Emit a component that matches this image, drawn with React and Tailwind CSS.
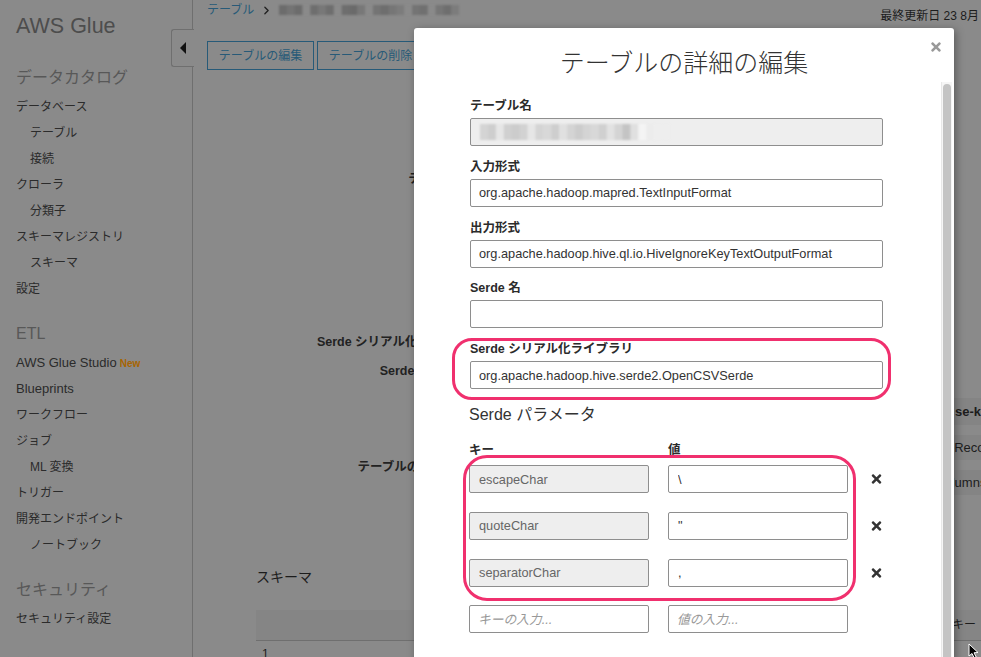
import { FaTimes } from "react-icons/fa";
import { ChevronRight } from "lucide-react";

const catalogItems = [
  { label: "データベース" },
  { label: "テーブル", sub: true },
  { label: "接続", sub: true },
  { label: "クローラ" },
  { label: "分類子", sub: true },
  { label: "スキーマレジストリ" },
  { label: "スキーマ", sub: true },
  { label: "設定" },
];

const etlItems = [
  { label: "AWS Glue Studio", isNew: true, latin: true },
  { label: "Blueprints", latin: true },
  { label: "ワークフロー" },
  { label: "ジョブ" },
  { label: "ML 変換", sub: true },
  { label: "トリガー" },
  { label: "開発エンドポイント" },
  { label: "ノートブック", sub: true },
];

const serdeParams = [
  { key: "escapeChar", value: "\\" },
  { key: "quoteChar", value: '"' },
  { key: "separatorChar", value: "," },
];

const NavGroup = ({ title, items }) => (
  <div className="mt-5">
    <h3 className="h-6 mb-1 text-base leading-6 text-[#585858]">{title}</h3>
    {items.map((item) => (
      <div
        key={item.label}
        className={`h-[26px] leading-[26px] text-[#2b2b2b] whitespace-nowrap ${item.latin ? "text-[13px]" : "text-xs"} ${item.sub ? "pl-[14px]" : ""}`}
      >
        {item.label}
        {item.isNew && <span className="ml-[3px] text-[10px] font-bold text-[#a86400]">New</span>}
      </div>
    ))}
  </div>
);

const Sidebar = () => (
  <aside className="relative z-10 w-[193px] shrink-0 border-r border-[#6f6f6f] pl-4 pt-[13px]">
    <div className="h-[26px] mb-[27px] text-[21.5px] leading-[26px] text-[#4d4d4d]">AWS Glue</div>
    <NavGroup title="データカタログ" items={catalogItems} />
    <NavGroup title="ETL" items={etlItems} />
    <NavGroup title="セキュリティ" items={[{ label: "セキュリティ設定" }]} />
    <NavGroup title="チュートリアル" items={[]} />
    <div className="absolute left-[171px] top-[29px] flex h-[38px] w-[23px] items-center justify-center rounded-l-[3px] border border-r-0 border-[#6f6f6f] bg-[#8a8a8a]">
      <svg width="6" height="12" viewBox="0 0 6 12">
        <polygon points="6,0 6,12 0,6" fill="#111" />
      </svg>
    </div>
  </aside>
);

const Mosaic = ({ width, colors, className }) => (
  <svg width={width} height="16" viewBox={`0 0 ${colors.length * 8} 16`} preserveAspectRatio="none" className={className}>
    {colors.map((c, i) => (
      <rect key={i} x={i * 8} y="0" width="8.5" height="16" fill={c} />
    ))}
  </svg>
);

const DetailLabel = ({ className, children }) => (
  <div className={`h-4 text-[12.5px] leading-4 font-bold text-[#222] text-right whitespace-nowrap ${className}`}>{children}</div>
);

const Band = ({ className, children }) => (
  <div className={`w-[300px] bg-[#848484] text-[13px] text-[#1c1c1c] whitespace-nowrap flex items-center ${className}`}>
    {children}
  </div>
);

const Main = () => (
  <main className="flex-1 min-w-0 pl-[14px]">
    <div className="flex h-4 items-start justify-between text-xs">
      <div className="mt-[2px] flex items-center text-[#275a78]">
        <span>テーブル</span>
        <ChevronRight size={13} strokeWidth={2.5} className="mx-[6px] text-[#222]" />
        <Mosaic
          width={180}
          className="blur-[1px] h-[10px]"
          colors={["#6c6c6c", "#747474", "#6c6c6c", "#8a8a8a", "#6e6e6e", "#787878", "#6e6e6e", "#8a8a8a", "#6e6e6e", "#6a6a6a", "#787878", "#8a8a8a", "#747474", "#6e6e6e", "#767676", "#7c7c7c", "#8a8a8a", "#747474", "#707070", "#8a8a8a", "#767676", "#6e6e6e", "#7c7c7c"]}
        />
      </div>
      <span className="mt-2 -mr-[28px] shrink-0 text-[#1c1c1c] whitespace-nowrap">最終更新日 23 8月 2021</span>
    </div>
    <div className="mt-[25px] flex h-[29px] gap-[3px]">
      <button className="h-[29px] w-[107px] border border-[#275a78] text-xs text-[#275a78]">テーブルの編集</button>
      <button className="h-[29px] w-[107px] border border-[#275a78] text-xs text-[#275a78]">テーブルの削除</button>
    </div>
    <div className="flex h-[497px]">
      <div className="w-[263px] shrink-0">
        <DetailLabel className="mt-[101px]">テーブル名</DetailLabel>
        <DetailLabel className="mt-[147px] -mr-[10px]">Serde シリアル化ライブラリ</DetailLabel>
        <DetailLabel className="mt-[13px] -mr-[10px]">Serde パラメータ</DetailLabel>
        <DetailLabel className="mt-[80px] -mr-[11px]">テーブルのプロパティ</DetailLabel>
      </div>
      <div className="ml-[430px] pt-[328px]">
        <Band className="h-[27px] mb-[10px] pl-[55px] font-bold">se-key</Band>
        <Band className="h-[25px] mb-[10px] pl-[47px]">eRecord</Band>
        <Band className="h-[25px] pl-[38px]">columns</Band>
      </div>
    </div>
    <div className="ml-[49px] h-5 text-sm leading-5 text-[#1c1c1c]">スキーマ</div>
    <div className="ml-[49px] mt-[23px] flex h-[31px] items-center justify-end border-b border-[#6f6f6f] bg-[#858585] pr-[5px] text-xs text-[#1c1c1c]">
      キー
    </div>
    <div className="ml-[55px] mt-[5px] text-xs text-[#1c1c1c]">1</div>
  </main>
);

const inputClass =
  "block h-7 w-full rounded-[2px] border border-[#8e8e8e] bg-white px-2 text-[12.75px] text-[#333] placeholder:italic placeholder:text-[#999] outline-none";
const disabledClass =
  "block h-7 w-full rounded-[2px] border border-[#8e8e8e] bg-[#eeeeee] px-[9px] text-[12.75px] text-[#666] outline-none";
const labelClass = "mb-1 block h-4 text-[12.5px] leading-4 font-bold text-[#2b2b2b]";

const Field = ({ label, value }) => (
  <div className="mb-[12.75px]">
    <label className={labelClass}>{label}</label>
    <input readOnly value={value} className={inputClass} />
  </div>
);

const Modal = () => (
  <div className="absolute left-[414px] top-[28px] z-20 h-[650px] w-[540px] rounded-[3px] bg-white pl-[56px] shadow-[2px_2px_8px_rgba(0,0,0,0.35)]">
    <FaTimes size={14} className="absolute right-[11px] top-[12px] text-[#999]" />
    <h2 className="-ml-[56px] pt-[17px] h-[53px] text-center text-[25px] leading-9 font-light text-[#333]">
      テーブルの詳細の編集
    </h2>
    <div className="w-[413px] pt-[17px]">
      <div className="mb-[12.75px]">
        <label className={labelClass}>テーブル名</label>
        <div className="flex h-7 items-center rounded-[2px] border border-[#8e8e8e] bg-[#eeeeee] pl-[9px]">
          <Mosaic
            width={190}
            className="blur-[1px] h-[16px]"
            colors={["#d4d4d4", "#cecece", "#e6e6e6", "#d0d0d0", "#cccccc", "#d2d2d2", "#e6e6e6", "#d4d4d4", "#d8d8d8", "#cecece", "#e0e0e0", "#d4d4d4", "#cccccc", "#d4d4d4", "#d8d8d8", "#d0d0d0", "#e2e2e2", "#d4d4d4", "#c4c4c4", "#e0e0e0", "#f4f4f4", "#ececec", "#eeeeee", "#eeeeee"]}
          />
        </div>
      </div>
      <Field label="入力形式" value="org.apache.hadoop.mapred.TextInputFormat" />
      <Field label="出力形式" value="org.apache.hadoop.hive.ql.io.HiveIgnoreKeyTextOutputFormat" />
      <Field label="Serde 名" value="" />
      <Field label="Serde シリアル化ライブラリ" value="org.apache.hadoop.hive.serde2.OpenCSVSerde" />
      <h4 className="mt-[15px] h-[22px] -ml-px text-base leading-[22px] text-[#333]">Serde パラメータ</h4>
      <div className="mt-4 -ml-px grid h-4 grid-cols-[180px_180px] gap-x-[19px] text-[12.5px] leading-4 font-bold text-[#2b2b2b]">
        <span>キー</span>
        <span>値</span>
      </div>
      <div className="mt-[7px] -ml-px flex flex-col gap-[18.75px]">
        {serdeParams.map((p) => (
          <div key={p.key} className="flex items-center">
            <div className="grid grid-cols-[180px_180px] gap-x-[19px]">
              <input readOnly value={p.key} className={disabledClass} />
              <input readOnly value={p.value} className={`${inputClass} pl-[9px]`} />
            </div>
            <FaTimes size={14} className="ml-[22px] text-[#333]" />
          </div>
        ))}
        <div className="grid grid-cols-[180px_180px] gap-x-[19px]">
          <input readOnly placeholder="キーの入力..." className={inputClass} />
          <input readOnly placeholder="値の入力..." className={inputClass} />
        </div>
      </div>
    </div>
    {/* scrollbar */}
    <div className="absolute right-[2px] top-[54px] bottom-0 w-[11px] border-l border-[#e8e8e8] bg-[#f6f6f6] pl-[1px] pt-[2px]">
      <div className="h-full w-[8px] rounded-t-[4px] bg-[#c4c4c4]" />
    </div>
    {/* hand drawn highlights on the screenshot */}
    <div className="absolute left-[38px] top-[310px] h-[62px] w-[439px] rounded-[20px] border-[3px] border-[#f0306e]" />
    <div className="absolute left-[49px] top-[427px] h-[146px] w-[393px] rounded-[24px] border-[3px] border-[#f0306e]" />
  </div>
);

const App = () => (
  <div className="relative flex h-[657px] w-[981px] overflow-hidden bg-[#8a8a8a] font-['Liberation_Sans','Noto_Sans_CJK_JP',sans-serif]">
    <Sidebar />
    <Main />
    <Modal />
    <svg width="12" height="16" viewBox="0 0 12 16" className="absolute left-[968px] top-[643px] z-30">
      <path d="M1 1 L1 13 L4 10.5 L6.2 15 L8.2 14 L6 9.8 L10 9.5 Z" fill="#000" stroke="#fff" strokeWidth="1" />
    </svg>
  </div>
);

export default App;
